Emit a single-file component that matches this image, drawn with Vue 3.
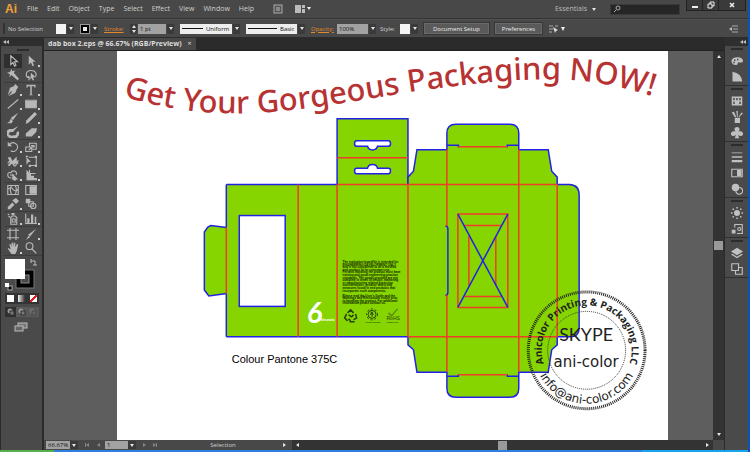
<template>
  <div class="window">
    <header class="menubar">
      <span class="logo">Ai</span>
      <nav class="menus">
        <a v-for="item in menus" :key="item" href="#">{{ item }}</a>
      </nav>
      <button class="bridge" type="button" aria-label="Bridge">
        <svg width="10" height="10" viewBox="0 0 10 10">
          <rect x="1" y="1" width="8" height="8" fill="#555" stroke="#aaa" />
          <path d="M3 3h4v4h-4z" fill="#888" />
        </svg>
      </button>
      <button class="arrange" type="button" aria-label="Arrange documents">
        <svg width="16" height="10" viewBox="0 0 16 10">
          <path d="M0 1h6v8H0zM7 1h3v3H7zM7 5h3v4H7z" fill="#bbb" />
          <path d="M12 3h4l-2 3z" fill="#eee" />
        </svg>
      </button>
      <button class="workspace" type="button">Essentials <i class="down"></i></button>
      <label class="search">
        <svg width="8" height="8" viewBox="0 0 8 8">
          <path d="M1 7l2-2" stroke="#aaa" />
          <circle cx="5" cy="3" r="2" fill="none" stroke="#aaa" />
        </svg>
        <input v-model="query" type="text" aria-label="Search" />
      </label>
      <div class="window-buttons">
        <button type="button" aria-label="Minimize">
          <svg width="8" height="8" viewBox="0 0 8 8"><path d="M1 5h6v2H1z" fill="#eee" /></svg>
        </button>
        <button type="button" aria-label="Restore">
          <svg width="8" height="8" viewBox="0 0 8 8">
            <path d="M3 3V1h4v4H5M1 3h4v4H1z" fill="none" stroke="#eee" />
          </svg>
        </button>
        <button class="close" type="button" aria-label="Close">
          <svg width="8" height="8" viewBox="0 0 8 8">
            <path d="M2 2l4 4M6 2L2 6" stroke="#eee" stroke-width="1.5" />
          </svg>
        </button>
      </div>
    </header>

    <div class="options">
      <span class="handle"></span>
      <span class="selection">No Selection</span>
      <div class="combo">
        <button class="swatch" type="button" aria-label="Fill"></button>
        <button class="arrow" type="button" aria-label="Fill options"><i class="down"></i></button>
      </div>
      <div class="combo">
        <button class="swatch outline" type="button" aria-label="Stroke colour"></button>
        <button class="arrow" type="button" aria-label="Stroke options"><i class="down"></i></button>
      </div>
      <label class="link" for="weight">Stroke:</label>
      <div class="combo">
        <span class="stepper"><i class="up"></i><i class="down"></i></span>
        <select id="weight" class="field weight"><option>1 pt</option></select>
        <span class="arrow"><i class="down"></i></span>
      </div>
      <div class="combo">
        <span class="line-box profile">
          <span class="line"></span>
          <select aria-label="Width profile"><option>Uniform</option></select>
        </span>
        <span class="arrow"><i class="down"></i></span>
      </div>
      <div class="combo">
        <span class="line-box brush">
          <span class="line"></span>
          <select aria-label="Brush"><option>Basic</option></select>
        </span>
        <span class="arrow"><i class="down"></i></span>
      </div>
      <label class="link" for="opacity">Opacity:</label>
      <div class="combo">
        <select id="opacity" class="field opacity"><option>100%</option></select>
        <span class="arrow"><i class="down"></i></span>
      </div>
      <span class="style-label">Style:</span>
      <div class="combo">
        <button class="swatch" type="button" aria-label="Style"></button>
        <button class="arrow" type="button" aria-label="Style options"><i class="down"></i></button>
      </div>
      <button class="push setup" type="button">Document Setup</button>
      <button class="push prefs" type="button">Preferences</button>
      <svg width="18" height="10" viewBox="0 0 18 10">
        <path d="M1 2h4M1 5h4M1 8h3M7 2h3" stroke="#aaa" />
        <path d="M5 3l5 3-2 1-1 2z" fill="#ddd" />
        <path d="M13 3h4l-2 4z" fill="#eee" />
      </svg>
      <svg class="panel-menu" width="10" height="8" viewBox="0 0 10 8">
        <path d="M0 4l3-2v4z" fill="#bbb" />
        <path d="M3 1h6M4 4h5M3 7h6" stroke="#aaa" />
      </svg>
    </div>

    <main class="workarea">
      <aside class="tools">
        <div class="collapse">
          <svg width="6" height="4" viewBox="0 0 6 4"><path d="M0 2l3-2v4zM3 2l3-2v4z" fill="#bbb" /></svg>
        </div>
        <div class="grip"></div>
        <div v-for="(group, g) in toolGroups" :key="g" class="tool-group">
          <button
            v-for="tool in group"
            :key="tool.name"
            type="button"
            class="tool"
            :class="{ active: tool.name === activeTool, more: tool.more }"
            :aria-label="tool.name"
            @click="activeTool = tool.name"
          >
            <svg width="12" height="12" viewBox="0 0 16 16">
              <path v-if="tool.fill" :d="tool.fill" fill="#b8b8b8" />
              <path v-if="tool.line" :d="tool.line" fill="none" stroke="#b8b8b8" stroke-width="1.5" />
            </svg>
          </button>
        </div>
        <svg class="fill-stroke" width="34" height="34" viewBox="0 0 34 34">
          <rect x="12" y="12" width="18" height="18" fill="#000" stroke="#777" />
          <rect x="17" y="17" width="8" height="8" fill="#4a4a4a" stroke="#888" />
          <rect x="1" y="1" width="20" height="20" fill="#fff" />
          <path d="M27 3h4v4M27 1v4M29 7h4" fill="none" stroke="#bbb" />
          <rect x="4" y="28" width="4" height="4" fill="#000" stroke="#aaa" />
          <rect x="1" y="25" width="4" height="4" fill="#fff" />
        </svg>
        <div class="paint-modes">
          <button type="button" aria-label="Color"><span class="paint solid"></span></button>
          <button type="button" aria-label="Gradient"><span class="paint gradient"></span></button>
          <button type="button" aria-label="None"><span class="paint none"></span></button>
        </div>
        <div class="draw-modes">
          <button v-for="mode in drawModes" :key="mode" type="button" :aria-label="mode">
            <svg width="8" height="8" viewBox="0 0 8 8">
              <circle cx="3" cy="3" r="2.5" fill="#999" />
              <rect x="3" y="3" width="4" height="4" fill="#777" stroke="#333" />
            </svg>
          </button>
        </div>
        <button class="screen-mode" type="button" aria-label="Change screen mode">
          <svg width="14" height="10" viewBox="0 0 14 10">
            <rect x="4" y="1" width="9" height="5" fill="#777" stroke="#bbb" />
            <rect x="1" y="4" width="8" height="5" fill="#666" stroke="#bbb" />
          </svg>
        </button>
      </aside>

      <section class="document">
        <div class="tabs">
          <div class="tab">
            <span>dab box 2.eps @ 66.67% (RGB/Preview)</span>
            <button type="button" aria-label="Close tab">×</button>
          </div>
        </div>

        <div class="view">
          <div class="canvas">
            <svg class="artboard" viewBox="117 51 552 389">
              <defs>
                <path id="wave" d="M123 96C165 109 205 114 245 113C310 112 390 93 440 88C500 79 560 76 600 83C625 87 645 93 695 109" />
                <path id="stamp-top" d="M545.2 365.9A45 45 0 1 1 629.8 365.9" />
                <path id="stamp-bottom" d="M535.3 361A53 53 0 0 0 639.4 361" />
              </defs>

              <text class="headline"><textPath href="#wave">Get Your Gorgeous Packaging NOW!</textPath></text>

              <!-- box die: bodies and cut lines -->
              <g class="cut">
                <path d="M227 227.500L211 225.500L208 227L204.500 232V290L209 296L227 293.500" />
                <path d="M337.500 185V118.500H408.500V185" />
                <path d="M408.500 185V177L414 171L417.500 149.500H447.500V133Q447.500 124 456.500 124H510.500Q519.500 124 519.500 133V149.500H549L552.500 171L558 177V185" />
                <path d="M408.500 337V345L414 350L417.500 372.500H447.500V388.500Q447.500 397.500 456.500 397.500H510.500Q519.500 397.500 519.500 388.500V372.500H549L552.500 350L558 345V337" />
                <path class="no-line" d="M226.500 184.500H574Q580 185 580 192V330Q580 337 574 337H226.500z" />
                <path d="M226.500 184.500H337.500M558 184.500H570Q580 185 580 195V328Q580 337 571 337H558M408.500 337H226.500M226.500 184.500V227.500M226.500 293.500V337" />
                <path d="M447.500 145H459V147M519.500 145H508V147M447.500 376.500H459V374.500M519.500 376.500H508V374.500" />
                <path d="M446 226Q448.500 226 448.500 229V292Q448.500 295.500 446 295.500" />
              </g>
              <g class="fold">
                <path d="M226.500 227.500V293.500M298.500 184.500V337M337.500 184.500V337M408.500 184.500V337" />
                <path d="M337.500 157.500H408.500M337.500 184.500H558M408.500 337H558" />
                <path d="M447.500 149V226M447.500 295V372M519.500 149V372M558 184.500V337M459 146.500H508M459 375H508" />
                <path d="M458.500 214H508.500V307.500H458.500zM465 225.500H502M465 296.500H502M469.500 236V286M496.500 236V286" />
              </g>
              <g class="cut holes">
                <rect x="239.500" y="215.500" width="46" height="91" />
                <path d="M357 140.500H389Q391 140.500 391 143.500Q391 146 389 146H378C377 151 369 151 368 146H357Q355 146 355 143.500Q355 140.500 357 140.500z" />
                <path d="M357 173.500H389Q391 173.500 391 170.500Q391 168 389 168H378C377 163 369 163 368 168H357Q355 168 355 170.500Q355 173.500 357 173.500z" />
              </g>
              <path class="cross" d="M458.500 214L508.500 307.500M508.500 214L458.500 307.500" />

              <text class="six" x="307" y="323">6</text>
              <text class="brand" x="320" y="321">Ninesix</text>

              <text
                v-for="(line, i) in smallPrint"
                :key="i"
                class="print"
                x="343"
                :y="263 + i * 2.6"
              >{{ line }}</text>

              <g class="marks">
                <path d="M348 313l3-3 3 3M356 314l1 4-3 2M347 314l-2 4 3 3M350 322h5M349 315l3 2 2-2M349 319l2 2" stroke-width="1.500" />
                <circle cx="372.500" cy="314.500" r="4" />
                <circle cx="372.500" cy="314.500" r="5.500" stroke-dasharray="2 2" />
                <path d="M372.500 312v5M371 315l1-3 2 3" />
                <path d="M389 313l3 3 6-7" stroke="#5c8a10" stroke-width="1.500" />
              </g>
              <text class="mark-label" x="366" y="323">OPEN SOURCE</text>
              <text class="rohs" x="387" y="320">RoHS</text>
              <text class="mark-label" x="387" y="323">COMPLIANT</text>

              <text class="caption" x="232" y="363">Colour Pantone 375C</text>

              <!-- round stamp -->
              <circle class="stamp-outer" cx="587.500" cy="350.500" r="58.500" />
              <circle class="stamp-inner" cx="587.500" cy="350.500" r="39" />
              <text class="stamp-text"><textPath href="#stamp-top" startOffset="50%">Anicolor Printing &amp; Packaging LLC</textPath></text>
              <text class="stamp-text wide"><textPath href="#stamp-bottom" startOffset="50%">info@ani-color.com</textPath></text>
              <text class="skype" x="587" y="341">SKYPE</text>
              <text class="account" x="587" y="367">ani-color</text>
            </svg>
          </div>
          <div class="scroll-y">
            <i class="up"></i>
            <span class="thumb"></span>
            <i class="down"></i>
          </div>
        </div>

        <footer class="status">
          <input v-model="zoom" class="zoom" type="text" aria-label="Zoom" />
          <button class="arrow" type="button" aria-label="Zoom levels"><i class="down"></i></button>
          <span class="pager">
            <i class="bar"></i><i class="left"></i>
            <i class="left single"></i>
          </span>
          <input v-model="page" class="page" type="text" aria-label="Artboard" />
          <button class="arrow" type="button" aria-label="Artboards"><i class="down"></i></button>
          <span class="pager next">
            <i class="right single"></i>
            <i class="right"></i><i class="bar"></i>
          </span>
          <span class="current">{{ activeTool }}</span>
          <i class="right"></i>
          <div class="scroll-x">
            <i class="left"></i>
            <span class="thumb"></span>
            <i class="right"></i>
          </div>
          <span class="corner"></span>
        </footer>
      </section>

      <aside class="dock">
        <div class="collapse">
          <svg width="6" height="4" viewBox="0 0 6 4"><path d="M0 2l3-2v4zM3 2l3-2v4z" fill="#bbb" /></svg>
        </div>
        <div v-for="(group, g) in panelGroups" :key="g" class="panel-group">
          <div class="grip"></div>
          <button v-for="panel in group" :key="panel.name" type="button" :aria-label="panel.name">
            <svg width="12" height="12" viewBox="0 0 16 16">
              <path v-if="panel.fill" :d="panel.fill" fill="#c0c0c0" fill-rule="evenodd" />
              <path v-if="panel.line" :d="panel.line" fill="none" stroke="#c0c0c0" stroke-width="1.5" />
            </svg>
          </button>
        </div>
      </aside>
    </main>
    <div class="taskbar"><span class="start"></span><span class="tray"></span></div>
  </div>
</template>

<script setup>
import { ref } from 'vue';

const menus = ['File', 'Edit', 'Object', 'Type', 'Select', 'Effect', 'View', 'Window', 'Help'];
const drawModes = ['Draw Normal', 'Draw Behind', 'Draw Inside'];

const query = ref('');
const zoom = ref('66.67%');
const page = ref('1');
const activeTool = ref('Selection');

const toolGroups = [
  [
    { name: 'Selection', line: 'M5 1v12l3-3 2 5 2-1-2-5h4z' },
    { name: 'Direct Selection', fill: 'M5 1v12l3-3 2 5 2-1-2-5h4z', more: true },
    { name: 'Magic Wand', fill: 'M6 0l1 3 4-1-2 3 7 8-2 2-8-7-3 3 1-4-4-2 4-1z' },
    { name: 'Lasso', fill: 'M8 5l6 6h-3l1 4-2 0-1-3-2 2z', line: 'M6 12C0 11 0 2 8 2s8 8 5 8M4 10q3 0 1 5' },
  ],
  [
    { name: 'Pen', fill: 'M11 0l4 4-2 3-2 5-9 4 5-6-2 0-4 5 3-10 5-2z', more: true },
    { name: 'Type', fill: 'M2 1h12v4h-1l-1-2H9v11l2 1H5l2-1V3H4L3 5H2z', more: true },
    { name: 'Line Segment', line: 'M1 14L15 2', more: true },
    { name: 'Rectangle', fill: 'M1 4h14v9H1z', line: 'M1 3h14v10H1z', more: true },
    { name: 'Paintbrush', fill: 'M15 1L8 11 5 8zM5 9l3 3-2 3-6 0 3-2z' },
    { name: 'Pencil', fill: 'M13 0l3 3L5 14l-4 2 1-5z', more: true },
    { name: 'Blob Brush', fill: 'M15 0L8 8H4l-2 3 4 2 6-1 1-4 3-1v5l-3 4H3l-3-3V6l3-2h5z' },
    { name: 'Eraser', fill: 'M9 3h7l-1 5-6 6H1l0-4z', more: true },
  ],
  [
    { name: 'Rotate', fill: 'M1 1v6h6z', line: 'M3 5c5-6 12-1 11 4s-6 6-9 4', more: true },
    { name: 'Scale', line: 'M1 8h8v6H1zM6 8V3h9v8H9M5 12l7-6M8 6h4v3', more: true },
    { name: 'Width', fill: 'M1 3l4 0 2 5 6-6 0 6 3 4-4-1-2 2-3-2-4 4-2-1 3-4z', line: 'M1 11q4-6 7 1t7-5', more: true },
    { name: 'Free Transform', fill: 'M2 3l6 6-3 0-3 4zM1 1h3v2H1zM13 1h3v3h-3zM13 13h3v3h-3zM5 13h3v3H5z', line: 'M5 3h10v11H7' },
    { name: 'Shape Builder', fill: 'M7 6l8 8-3 0-1 2-4-2z', line: 'M6 12C-1 12 0 3 5 5c3-5 10-1 7 3M4 8h5', more: true },
    { name: 'Perspective Grid', fill: 'M2 1l3 3v2l3 0v3l4 0v3h4v3H2z', line: 'M2 6h12M6 1v14', more: true },
  ],
  [
    { name: 'Mesh', line: 'M1 2h14v12H1zM1 7q5-4 7 0t7 0M6 2q-3 6 0 12M11 2q3 6 0 12' },
    { name: 'Gradient', fill: 'M6 3h9v10H6z', line: 'M1 2h14v12H1z' },
    { name: 'Eyedropper', fill: 'M12 0l4 4-4 4-5-5zM7 6l3 3-6 6-3 0 0-3z', more: true },
    { name: 'Blend', fill: 'M1 1h6v6H1z', line: 'M5 5h6v6H5zM11 7a3.500 3.500 0 1 1 0 7a3.500 3.500 0 1 1 0-7z' },
  ],
  [
    { name: 'Symbol Sprayer', fill: 'M6 0h4v3H6zM1 1h2v2H1zM2 4h2v2H2z', line: 'M5 6l2-2h4l2 2v9H5zM7 8h4v4H7z', more: true },
    { name: 'Column Graph', fill: 'M3 7h3v7H3zM8 2h3v12H8zM13 5h2v9h-2z', line: 'M1 1v13h15', more: true },
  ],
  [
    { name: 'Artboard', line: 'M4 0v16M12 0v16M0 3h16M0 13h16' },
    { name: 'Slice', fill: 'M15 1L7 11 4 9zM5 10l2 2-6 4z', more: true },
    { name: 'Hand', fill: 'M3 3h2l1 4V1h2v6l1-6h2v6l2-4h2l-2 9-2 4H6L1 9l1-1 3 2z', more: true },
    { name: 'Zoom', line: 'M6 1a4.500 4.500 0 1 1 0 9a4.500 4.500 0 1 1 0-9zM9 9l6 6' },
  ],
];

const panelGroups = [
  [
    { name: 'Color', fill: 'M8 3c-6 0-8 4-7 7s5 4 7 3 0-3 2-3 6 1 6-2-3-5-8-5zM4 6h2v2H4zM8 5h2v2H8zM3 9h2v2H3z' },
    { name: 'Color Guide', fill: 'M2 1q12 2 13 13H2z' },
  ],
  [
    { name: 'Swatches', fill: 'M1 2h14v12H1zM3 4v3h2V4zM7 4v3h2V4zM11 4v3h2V4zM3 9v3h2V9zM11 9v3h2V9z' },
    { name: 'Brushes', fill: 'M5 9h7v7H5zM1 2l3-1 3 7H5zM7 0h2v8H8zM14 2l2 1-5 5h-1z' },
    { name: 'Symbols', fill: 'M8 0c4 0 4 4 2 6 7-2 8 6 3 6-3 0-4-2-4-2l2 5H5l2-5s-1 2-4 2c-5 0-4-8 3-6-2-2-2-6 2-6z' },
  ],
  [
    { name: 'Stroke', fill: 'M1 2h14v1H1zM1 7h14v2H1zM1 12h14v3H1z' },
    { name: 'Gradient', fill: 'M8 4h6v8H8z', line: 'M1 3h14v10H1z' },
    { name: 'Transparency', fill: 'M6 1a5 5 0 1 1 0 10a5 5 0 1 1 0-10z', line: 'M11 6a4.500 4.500 0 1 1 0 9a4.500 4.500 0 1 1 0-9z' },
  ],
  [
    { name: 'Appearance', fill: 'M8 4a4 4 0 1 1 0 8a4 4 0 1 1 0-8zM7 0h2v2H7zM7 14h2v2H7zM0 7h2v2H0zM14 7h2v2h-2zM2 2h2v2H2zM12 2h2v2h-2zM2 12h2v2H2zM12 12h2v2h-2z' },
    { name: 'Graphic Styles', fill: 'M1 9h5v5H1z', line: 'M5 6V2h10v12H8M11 6a2 2 0 1 0 0 4a2 2 0 1 0 0-4z' },
  ],
  [
    { name: 'Layers', fill: 'M8 1l8 5-8 5-8-5zM2 9l6 4 6-4 2 1-8 5-8-5z' },
    { name: 'Artboards', line: 'M1 1h9v9H1zM10 6h5v9H6v-5' },
  ],
];

const smallPrint = [
  'The evaluation board/kit is intended for',
  'ENGINEERING DEVELOPMENT ONLY',
  'and is not considered to be a finished',
  'end-product fit for consumer use.',
  'Persons handling the product must have',
  'training and good engineering practice',
  'standards. The goods provided are not',
  'complete in terms of design, marketing',
  'or manufacturing related protective',
  'considerations, product safety and',
  'measures found in end products that',
  'incorporate such components.',
  '',
  'Please read the User\'s Guide and the',
  'Warnings and Restrictions notice prior',
  'to handling the product. For additional',
  'information please contact us.',
];
</script>

<style>
body {
  margin: 0;
  background: #0a54b5;
}
</style>

<style scoped>
.window {
  display: flex;
  flex-direction: column;
  height: 100vh;
  padding-right: 2px;
  box-sizing: border-box;
  font-family: "Open Sans", "Noto Sans", sans-serif;
  font-size: 7px;
  line-height: 10px;
  color: #d0d0d0;
  overflow: hidden;
}

.window * {
  box-sizing: border-box;
}

button,
select,
input {
  margin: 0;
  padding: 0;
  border: 0;
  border-radius: 0;
  background: none;
  color: inherit;
  font: inherit;
  appearance: none;
}

button {
  display: flex;
  align-items: center;
  justify-content: center;
}

svg {
  display: block;
  flex: none;
}

/* small triangles */
.up,
.down,
.left,
.right {
  flex: none;
  width: 0;
  height: 0;
  border: 2px solid transparent;
}

.down {
  border-top: 3px solid #e4e4e4;
  border-bottom: 0;
}

.up {
  border-bottom: 3px solid #e4e4e4;
  border-top: 0;
}

.left {
  border-right: 3px solid #e4e4e4;
  border-left: 0;
}

.right {
  border-left: 3px solid #e4e4e4;
  border-right: 0;
}

.menubar {
  display: flex;
  align-items: center;
  flex: none;
  height: 19px;
  padding-left: 5px;
  background: #484848;
  border-bottom: 1px solid #333;
}

.logo {
  width: 22px;
  color: #f2a03a;
  font-family: "Liberation Sans", sans-serif;
  font-size: 12px;
  font-weight: bold;
}

.menus {
  display: flex;
  gap: 9px;
}

.menus a {
  color: inherit;
  text-decoration: none;
}

.bridge {
  margin-left: 19px;
}

.arrange {
  margin-left: 12px;
}

.workspace {
  gap: 5px;
  margin-left: auto;
  margin-right: 14px;
  color: #bbb;
}

.search {
  display: flex;
  align-items: center;
  width: 70px;
  height: 11px;
  margin-right: 6px;
  padding-left: 2px;
  background: #262626;
  border: 1px solid #3a3a3a;
}

.search input {
  width: 50px;
}

.window-buttons {
  display: flex;
  align-self: flex-start;
  height: 11px;
  margin-right: 2px;
  background: #3a3a3a;
  border: 1px solid #222;
  border-top: 0;
}

.window-buttons button {
  width: 16px;
  border-right: 1px solid #222;
}

.window-buttons .close {
  width: 26px;
  border-right: 0;
}

.options {
  display: flex;
  align-items: center;
  flex: none;
  gap: 6px;
  height: 19px;
  padding: 0 9px 0 3px;
  background: #484848;
  border-top: 1px solid #525252;
  border-bottom: 1px solid #2c2c2c;
  font-size: 6px;
  white-space: nowrap;
}

.handle {
  width: 2px;
  height: 11px;
  margin-right: -3px;
  background: #333;
}

.selection {
  width: 42px;
}

.combo {
  display: flex;
  gap: 1px;
  height: 10px;
}

.swatch {
  width: 10px;
  background: #f4f4f4;
}

.outline {
  background: #eee;
  border: 3px solid #000;
  outline: 1px solid #999;
  outline-offset: -1px;
}

.arrow {
  display: flex;
  align-items: center;
  justify-content: center;
  width: 8px;
  background: #3a3a3a;
}

.combo .arrow {
  width: 7px;
}

.link {
  width: 20px;
  color: #e08a2c;
  text-decoration: underline;
}

.stepper {
  display: flex;
  flex-direction: column;
  align-items: center;
  justify-content: center;
  gap: 2px;
  width: 7px;
  background: #3a3a3a;
}

.field {
  padding: 0 2px;
  background: #a2a2a2;
  color: #111;
}

.weight {
  width: 28px;
}

.opacity {
  width: 31px;
}

.line-box {
  display: flex;
  align-items: center;
  gap: 3px;
  padding: 0 2px;
  background: #ededed;
  color: #111;
}

.line-box .line {
  flex: 1;
  height: 1px;
  background: #111;
}

.profile {
  width: 52px;
}

.brush {
  width: 51px;
}

.style-label {
  width: 14px;
  margin-left: -2px;
}

.push {
  height: 11px;
  background: #5a5a5a;
  border: 1px solid #6a6a6a;
  outline: 1px solid #363636;
  color: #ececec;
}

.setup {
  width: 65px;
}

.prefs {
  width: 47px;
}

.panel-menu {
  margin-left: auto;
}

.workarea {
  display: flex;
  flex: 1;
  min-height: 0;
  background: #2b2b2b;
}

.tools {
  flex: none;
  width: 42px;
  margin-right: 2px;
  padding-left: 3px;
  background: #4a4a4a;
  border-left: 1px solid #2b2b2b;
}

.collapse {
  display: flex;
  align-items: center;
  height: 8px;
  padding: 0 2px;
  background: #2e2e2e;
}

.tools .collapse {
  margin-left: -3px;
}

.grip {
  width: 12px;
  height: 2px;
  margin: 3px auto;
  background: #2c2c2c;
}

.tool-group {
  display: grid;
  grid-template-columns: 18px 18px;
  border-bottom: 1px solid #3c3c3c;
}

.tool-group:last-of-type {
  border-bottom: 0;
}

.tool {
  position: relative;
  height: 14px;
}

.tool.active {
  background: #2f2f2f;
}

.tool.more::after {
  content: "";
  position: absolute;
  right: 0;
  bottom: 1px;
  width: 2px;
  height: 2px;
  background: #ccc;
}

.fill-stroke {
  margin-top: 2px;
}

.paint-modes {
  display: flex;
  width: 34px;
  margin: 1px 0 0 1px;
  background: #333;
}

.paint-modes button {
  flex: 1;
  height: 11px;
}

.paint {
  width: 7px;
  height: 7px;
  background: #fff;
}

.gradient {
  background: linear-gradient(90deg, #eee, #333);
}

.none {
  background: linear-gradient(135deg, #fff 42%, #e02020 42%, #e02020 58%, #fff 58%);
}

.draw-modes {
  display: flex;
  width: 34px;
  margin: 3px 0 0 1px;
  background: #5a5a5a;
}

.draw-modes button {
  flex: 1;
  height: 10px;
}

.draw-modes button:first-child {
  background: #303030;
}

.draw-modes button:last-child {
  opacity: 0.4;
}

.screen-mode {
  margin: 5px 0 0 10px;
}

.document {
  display: flex;
  flex-direction: column;
  flex: 1;
  min-width: 0;
}

.tabs {
  display: flex;
  flex: none;
  height: 13px;
  border-bottom: 1px solid #222;
}

.tab {
  display: flex;
  align-items: center;
  gap: 6px;
  padding: 0 4px;
  background: #484848;
  color: #ddd;
  font-weight: bold;
  white-space: nowrap;
}

.tab button {
  font-weight: normal;
}

.view {
  display: flex;
  flex: 1;
  min-height: 0;
}

.canvas {
  flex: 1;
  padding: 0 45px 0 73px;
  background: #5e5e5e;
}

.artboard {
  width: 100%;
  height: 100%;
  background: #fff;
}

.headline {
  font-family: "Noto Sans", sans-serif;
  font-size: 31px;
  font-weight: 500;
  fill: #b73333;
}

.cut path {
  fill: #86d500;
  stroke: #2222e6;
  stroke-width: 1.5px;
}

.cut .no-line {
  stroke: none;
}

.cut .no-line ~ path {
  fill: none;
}

.fold path {
  fill: none;
  stroke: #f03c28;
  stroke-width: 1.5px;
}

.cut.holes > * {
  fill: #fff;
  stroke: #2222e6;
  stroke-width: 1.5px;
}

.cross {
  stroke: #2222e6;
  stroke-width: 1.5px;
}

.six {
  fill: #fff;
  font-family: Lato, sans-serif;
  font-size: 29px;
  font-style: italic;
  font-weight: bold;
}

.brand {
  fill: #fff;
  font-size: 4px;
  font-weight: bold;
}

.print {
  font-family: "Liberation Sans", sans-serif;
  font-size: 3px;
  font-weight: bold;
  fill: #0c1a00;
}

.mark-label {
  font-family: "Liberation Sans", sans-serif;
  font-size: 2px;
  font-weight: bold;
  fill: #24400a;
}

.marks {
  fill: none;
  stroke: #24400a;
}

.rohs {
  font-family: "Liberation Sans", sans-serif;
  font-size: 5px;
  fill: #24400a;
}

.caption {
  font-family: "Liberation Sans", sans-serif;
  font-size: 11px;
  fill: #000;
}

.stamp-outer {
  fill: none;
  stroke: #222;
  stroke-width: 3px;
  stroke-dasharray: 1 1;
}

.stamp-inner {
  fill: none;
  stroke: #333;
  stroke-dasharray: 1 1;
}

.stamp-text {
  font-size: 10px;
  font-weight: bold;
  text-anchor: middle;
  fill: #222;
}

.wide {
  font-family: "DejaVu Sans", sans-serif;
  font-weight: normal;
  font-size: 12px;
}

.skype {
  font-family: Lato, sans-serif;
  font-size: 18px;
  text-anchor: middle;
  fill: #222;
}

.account {
  font-family: "DejaVu Sans", sans-serif;
  font-size: 15px;
  text-anchor: middle;
  fill: #222;
}

.scroll-y {
  display: flex;
  flex-direction: column;
  align-items: center;
  justify-content: space-between;
  flex: none;
  width: 11px;
  padding: 4px 0;
  background: #333;
}

.thumb {
  width: 9px;
  height: 9px;
  background: #9a9a9a;
}

.status {
  display: flex;
  align-items: center;
  flex: none;
  height: 10px;
  padding-left: 2px;
  background: #484848;
  font-size: 6px;
}

.status input {
  height: 8px;
  padding-left: 2px;
  background: #a2a2a2;
  color: #111;
  line-height: 8px;
}

.status .arrow {
  height: 8px;
}

.zoom {
  width: 24px;
}

.page {
  width: 23px;
}

.pager {
  display: flex;
  align-items: center;
  width: 27px;
  padding-left: 7px;
  opacity: 0.4;
}

.pager .bar {
  width: 1px;
  height: 4px;
  background: #e4e4e4;
}

.pager .left.single {
  margin-left: 8px;
}

.pager .right.single {
  margin-right: 7px;
}

.current {
  width: 120px;
  text-align: center;
}

.scroll-x {
  display: flex;
  align-items: center;
  justify-content: space-between;
  flex: 1;
  height: 100%;
  margin-left: 6px;
  padding: 0 4px;
  background: #333;
}

.corner {
  width: 11px;
}

.dock {
  flex: none;
  width: 23px;
  margin-left: 1px;
  background: #4a4a4a;
}

.dock .collapse {
  justify-content: flex-end;
}

.panel-group {
  border-bottom: 1px solid #303030;
}

.panel-group button {
  width: 100%;
  height: 16px;
}

.panel-group .grip {
  margin: 2px auto 3px;
}

.taskbar {
  display: flex;
  flex: none;
  justify-content: space-between;
  height: 2px;
  background: #2f7fe0;
}

.start {
  width: 54px;
  background: #55b04c;
}

.tray {
  width: 106px;
  background: #16a5ea;
}
</style>
